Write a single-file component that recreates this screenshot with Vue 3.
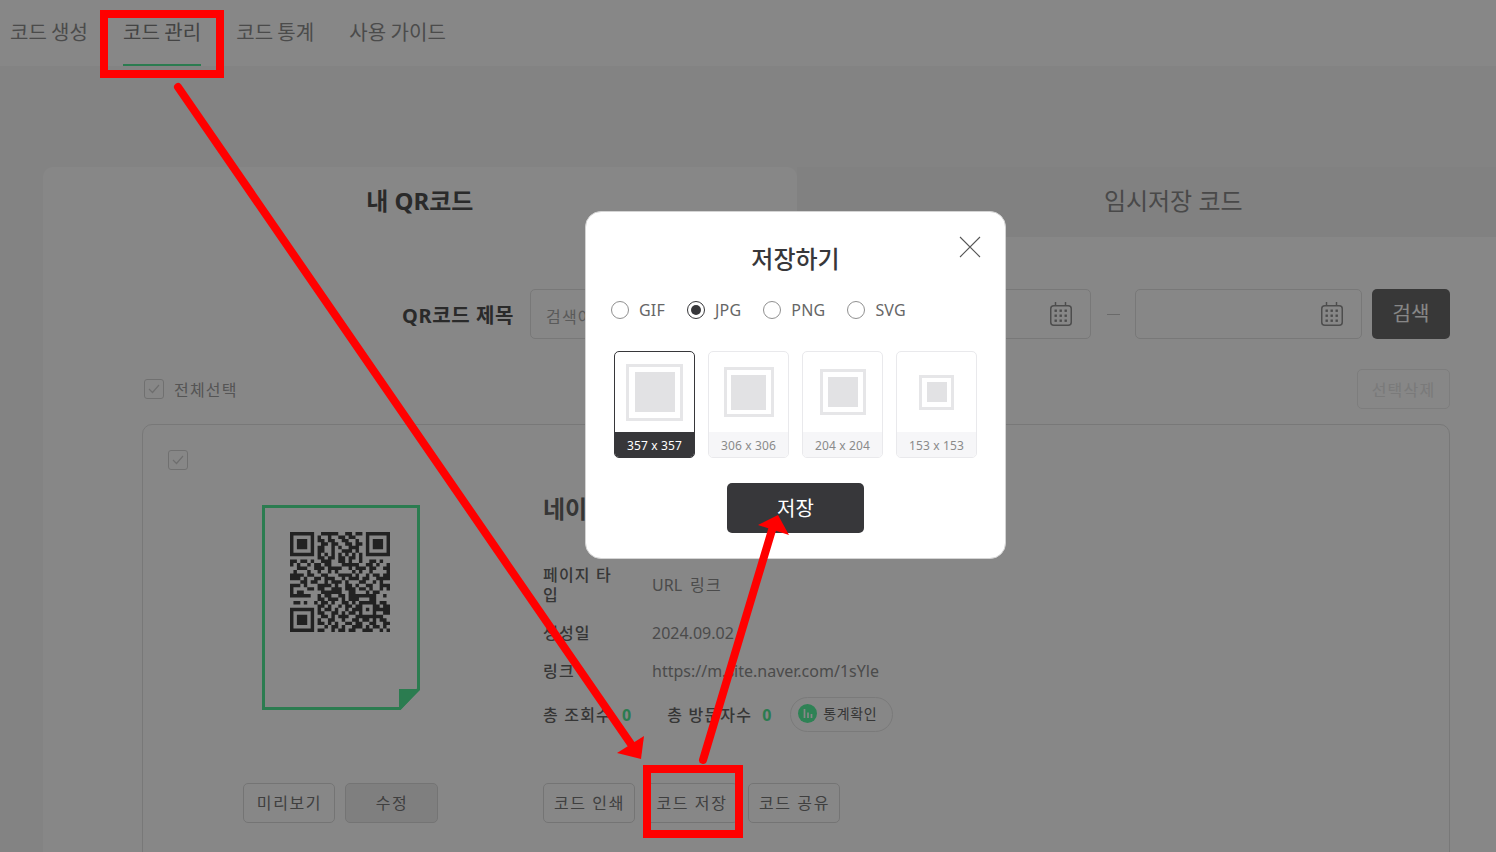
<script setup>
import { ref } from "vue";

const navItems = ["코드 생성", "코드 관리", "코드 통계", "사용 가이드"];
const activeNav = ref(1);

const formats = ["GIF", "JPG", "PNG", "SVG"];
const format = ref("JPG");

const sizes = [
  { label: "357 x 357", outer: 57, inner: 40 },
  { label: "306 x 306", outer: 50, inner: 35 },
  { label: "204 x 204", outer: 46, inner: 30 },
  { label: "153 x 153", outer: 35, inner: 20 },
];
const size = ref(0);

const qrRows = [
  "11111110011111001101101111111",
  "10000010100100110110001000001",
  "10111010110110011001001011101",
  "10111010011011001101101011101",
  "10111010110010100111001011101",
  "10000010110010011101001000001",
  "11111110101010101010101111111",
  "00000000110110110110100000000",
  "11011010011100110100100110100",
  "10100101101100011111001101001",
  "00111001110111100101110110011",
  "01000100100101000010100100001",
  "11110110011000111101001011011",
  "11101001101110010111011001111",
  "00011011001011101000110010100",
  "11101000111101001101001100111",
  "10000110110011101110110100101",
  "10110000011111100110001011000",
  "11111100101100110111111110010",
  "00000000110111010111000110000",
  "01101001011010011010111110110",
  "00000000110100101101100011011",
  "11111110101101001011101011111",
  "10000010110011010110100010011",
  "10111010011010111001111111100",
  "10111010100110010011011010110",
  "10111010110101001101100110011",
  "10000010001011010011101011010",
  "11111110110010110110011100101",
];

// one path for the whole code, 1 unit = 1 module
const qrPath = qrRows
  .map((row, y) =>
    row
      .split("")
      .map((cell, x) => (cell === "1" ? `M${x} ${y}h1v1h-1z` : ""))
      .join("")
  )
  .join("");

const calendarDots = [];
for (let r = 0; r < 3; r++) {
  for (let c = 0; c < 3; c++) calendarDots.push({ x: 4.5 + c * 5, y: 7.5 + r * 5 });
}
</script>

<template>
  <div class="page">
    <header class="top">
      <nav class="nav">
        <a
          v-for="(item, i) in navItems"
          :key="item"
          class="nav-item"
          :class="{ on: i === activeNav }"
        >{{ item }}</a>
      </nav>
    </header>

    <main class="panel-wrap">
      <div class="tabs">
        <div class="tab on">내 QR코드</div>
        <div class="tab">임시저장 코드</div>
      </div>

      <section class="panel">
        <div class="search">
          <label class="search-label">QR코드 제목</label>
          <div class="field title-field"><span class="placeholder">검색어</span></div>
          <div class="field date-field">
            <svg class="cal" width="22" height="24" viewBox="0 0 22 24">
              <rect x="0.75" y="3.75" width="20.5" height="19.5" rx="3" fill="none" stroke="#929292" stroke-width="1.5" />
              <path d="M5.5 0v4M15.5 0v4" stroke="#929292" stroke-width="1.5" />
              <rect v-for="(d, i) in calendarDots" :key="i" :x="d.x" :y="d.y" width="2.4" height="2.4" fill="#929292" />
            </svg>
          </div>
          <span class="dash"></span>
          <div class="field date-field">
            <svg class="cal" width="22" height="24" viewBox="0 0 22 24">
              <rect x="0.75" y="3.75" width="20.5" height="19.5" rx="3" fill="none" stroke="#929292" stroke-width="1.5" />
              <path d="M5.5 0v4M15.5 0v4" stroke="#929292" stroke-width="1.5" />
              <rect v-for="(d, i) in calendarDots" :key="i" :x="d.x" :y="d.y" width="2.4" height="2.4" fill="#929292" />
            </svg>
          </div>
          <button class="search-btn">검색</button>
        </div>

        <div class="list-bar">
          <label class="check-all">
            <span class="check">
              <svg width="12" height="10" viewBox="0 0 12 10"><path d="M1 5l3.5 3.5L11 1" fill="none" stroke="#d0d0d0" stroke-width="1.2" /></svg>
            </span>
            전체선택
          </label>
          <button class="del-btn">선택삭제</button>
        </div>

        <article class="item">
          <span class="check">
            <svg width="12" height="10" viewBox="0 0 12 10"><path d="M1 5l3.5 3.5L11 1" fill="none" stroke="#d0d0d0" stroke-width="1.2" /></svg>
          </span>

          <div class="item-body">
            <div class="item-left">
              <div class="doc">
                <svg width="158" height="205" viewBox="0 0 158 205">
                  <path d="M1.5 1.5H156.5V184L138 203.5H1.5Z" fill="#fff" stroke="#52ea98" stroke-width="3" />
                  <path d="M138 203.5V185H156.5Z" fill="#52ea98" stroke="#52ea98" stroke-width="2" />
                  <g class="qr" transform="translate(28 27) scale(3.448)">
                    <path :d="qrPath" fill="#404040" />
                  </g>
                </svg>
              </div>
              <div class="btn-row">
                <button class="btn">미리보기</button>
                <button class="btn grey">수정</button>
              </div>
            </div>

            <div class="item-right">
              <h3 class="item-title">네이버 링크</h3>
              <div class="rows">
                <div class="info-row">
                  <span class="info-label">페이지 타입</span>
                  <span class="info-value">URL<span class="ko">링크</span></span>
                </div>
                <div class="info-row">
                  <span class="info-label">생성일</span>
                  <span class="info-value">2024.09.02</span>
                </div>
                <div class="info-row">
                  <span class="info-label">링크</span>
                  <span class="info-value">https://m.site.naver.com/1sYle</span>
                </div>
              </div>
              <div class="stats">
                <span class="info-label stat-name">총 조회수</span>
                <b class="num first">0</b>
                <span class="info-label stat-name">총 방문자수</span>
                <b class="num">0</b>
                <span class="pill">
                  <span class="pill-ico">
                    <svg width="10" height="9" viewBox="0 0 10 9"><path d="M1.5 0v9M5 3.5V9M8.5 5v4" stroke="#fff" stroke-width="1.7" /></svg>
                  </span>
                  통계확인
                </span>
              </div>
              <div class="btn-row wide">
                <button class="btn">코드 인쇄</button>
                <button class="btn">코드 저장</button>
                <button class="btn">코드 공유</button>
              </div>
            </div>
          </div>
        </article>
      </section>
    </main>

    <div class="dim"></div>

    <div class="modal">
      <button class="close">
        <svg width="22" height="22" viewBox="0 0 22 22"><path d="M1 1l20 20M21 1L1 21" stroke="#555" stroke-width="1.1" /></svg>
      </button>
      <h2 class="modal-title">저장하기</h2>

      <div class="formats">
        <label v-for="f in formats" :key="f" class="radio" @click="format = f">
          <span class="dot" :class="{ on: format === f }"></span>
          {{ f }}
        </label>
      </div>

      <div class="sizes">
        <div
          v-for="(s, i) in sizes"
          :key="s.label"
          class="size"
          :class="{ on: size === i }"
          @click="size = i"
        >
          <div class="size-pic">
            <div class="frame" :style="{ width: s.outer + 'px', height: s.outer + 'px' }">
              <div class="fill" :style="{ width: s.inner + 'px', height: s.inner + 'px' }"></div>
            </div>
          </div>
          <div class="size-label">{{ s.label }}</div>
        </div>
      </div>

      <button class="save">저장</button>
    </div>

    <!-- red marks drawn on top of the capture -->
    <svg class="marks" width="1496" height="852" viewBox="0 0 1496 852">
      <rect x="104" y="14" width="116" height="60" fill="none" stroke="#ff0000" stroke-width="8" />
      <rect x="647" y="769" width="92" height="65" fill="none" stroke="#ff0000" stroke-width="8" />
      <path d="M178 87L633 747" stroke="#ff0000" stroke-width="8" stroke-linecap="round" />
      <path d="M644 736L617 753L641 759Z" fill="#ff0000" />
      <path d="M703 760L772 530" stroke="#ff0000" stroke-width="8" stroke-linecap="round" />
      <path d="M778 515L758 525L789 535Z" fill="#ff0000" />
    </svg>
  </div>
</template>

<style>
html,
body {
  margin: 0;
  overflow: hidden;
}
</style>

<style scoped>
.page {
  position: relative;
  width: 1496px;
  height: 852px;
  overflow: hidden;
  background: #f8f8f8;
  font-family: "Noto Sans", "Noto Sans CJK KR", sans-serif;
  color: #37373a;
}

.top {
  height: 66px;
  background: #fff;
  padding-left: 10px;
  box-sizing: border-box;
}
.nav {
  display: flex;
  gap: 35px;
}
.nav-item {
  display: block;
  height: 66px;
  box-sizing: border-box;
  padding-top: 18px;
  font-size: 20px;
  line-height: 30px;
  letter-spacing: 0.1px;
  word-spacing: -1.2px;
  color: #8e8e8e;
}
.nav-item.on {
  color: #808080;
  border-bottom: 2px solid #52ea98;
}

.panel-wrap {
  width: 1507px;
  margin: 101px 0 0 43px;
}
.tabs {
  display: flex;
}
.tab {
  flex: 1;
  height: 70px;
  line-height: 68px;
  text-align: center;
  font-size: 24px;
  color: #8a8a8a;
  background: #f3f3f3;
}
.tab.on {
  background: #fff;
  color: #505050;
  font-weight: 700;
  border-radius: 10px 10px 0 0;
}

.panel {
  background: #fff;
  padding: 52px 100px 0;
}
.search {
  display: flex;
  align-items: center;
  justify-content: flex-end;
  height: 50px;
}
.search-label {
  font-size: 20px;
  font-weight: 700;
  letter-spacing: 0.6px;
  color: #505050;
  margin-right: 16px;
  white-space: nowrap;
}
.field {
  height: 50px;
  box-sizing: border-box;
  border: 1px solid #e2e2e2;
  border-radius: 5px;
  display: flex;
  align-items: center;
}
.title-field {
  width: 320px;
  padding-left: 15px;
  margin-right: 14px;
}
.placeholder {
  padding-top: 3px;
  font-size: 16px;
  letter-spacing: 1.2px;
  color: #aaa;
}
.date-field {
  width: 227px;
  justify-content: flex-end;
  padding-right: 18px;
}
.dash {
  width: 13px;
  height: 1px;
  background: #c8c8c8;
  margin: 0 15px 0 16px;
}
.search-btn {
  width: 78px;
  height: 50px;
  padding: 0 0 3px;
  margin-left: 10px;
  border: 0;
  border-radius: 5px;
  background: #6b6b6b;
  color: #fff;
  font: inherit;
  font-size: 20px;
}

.list-bar {
  display: flex;
  align-items: center;
  justify-content: space-between;
  margin-top: 30px;
  height: 40px;
}
.check-all {
  display: flex;
  align-items: center;
  gap: 10px;
  margin-left: 1px;
  font-size: 16px;
  letter-spacing: 1.2px;
  color: #a0a0a0;
}
.check {
  width: 20px;
  height: 20px;
  box-sizing: border-box;
  border: 1px solid #d4d4d4;
  border-radius: 3px;
  display: flex;
  align-items: center;
  justify-content: center;
}
.del-btn {
  width: 93px;
  height: 40px;
  padding: 0;
  border: 1px solid #ececec;
  border-radius: 5px;
  background: #fff;
  color: #e6e6e6;
  font: inherit;
  font-size: 16px;
  letter-spacing: 1.2px;
}

.item {
  margin: 15px 0 0 -1px;
  height: 500px;
  box-sizing: border-box;
  border: 1px solid #e2e2e2;
  border-radius: 10px;
  padding: 25px 24px 0 25px;
}
.item-body {
  display: flex;
  margin-top: 20px;
}
.item-left {
  width: 195px;
  margin-left: 75px;
  padding-top: 15px;
  display: flex;
  flex-direction: column;
}
.doc {
  height: 205px;
  margin-left: 19px;
}
.doc svg {
  display: block;
}
.qr {
  filter: blur(0.1px);
}
.btn-row {
  display: flex;
  gap: 10px;
  margin-top: 73px;
}
.btn {
  width: 92px;
  height: 40px;
  padding: 0 0 2px 1px;
  box-sizing: border-box;
  border: 1px solid #dcdcdc;
  border-radius: 5px;
  background: #fff;
  color: #777;
  font: inherit;
  font-size: 16px;
  letter-spacing: 1.6px;
}
.btn.grey {
  width: 93px;
  background: #f0f0f0;
}

.item-right {
  margin-left: 105px;
  width: 600px;
}
.item-title {
  margin: 0;
  font-size: 24px;
  line-height: 38px;
  font-weight: 700;
  color: #666;
}
.rows {
  margin-top: 37px;
  display: flex;
  flex-direction: column;
  gap: 18px;
}
.info-row {
  display: flex;
  align-items: center;
}
.info-label {
  width: 75px;
  margin-right: 34px;
  font-size: 16px;
  line-height: 20px;
  letter-spacing: 1.2px;
  color: #666;
  font-weight: 500;
}
.info-value {
  font-size: 16px;
  line-height: 20px;
  color: #8e8e8e;
}
.ko {
  margin-left: 8px;
  letter-spacing: 1.2px;
}
.stats {
  display: flex;
  align-items: center;
  height: 35px;
  margin-top: 16px;
}
.stat-name {
  width: auto;
  margin-right: 0;
}
.num {
  margin-left: 10px;
  margin-right: 19px;
  font-size: 16px;
  color: #52ea98;
}
.num.first {
  margin-right: 36px;
}
.pill {
  display: flex;
  align-items: center;
  gap: 6px;
  height: 35px;
  box-sizing: border-box;
  padding: 0 15px 3px 7px;
  border: 1px solid #e6e6e6;
  border-radius: 18px;
  font-size: 14px;
  letter-spacing: 0.6px;
  color: #666;
}
.pill-ico {
  width: 19px;
  height: 19px;
  border-radius: 50%;
  background: #57f5a0;
  display: flex;
  align-items: center;
  justify-content: center;
}
.pill-ico svg {
  display: block;
}
.btn-row.wide {
  gap: 10.5px;
  margin-top: 51px;
}

.dim {
  position: absolute;
  inset: 0;
  background: rgba(0, 0, 0, 0.47);
  z-index: 10;
}

.modal {
  position: absolute;
  left: 585px;
  top: 211px;
  width: 421px;
  height: 348px;
  box-sizing: border-box;
  padding-top: 30px;
  background: #fff;
  border: 1px solid #d4d4d4;
  border-radius: 16px;
  z-index: 20;
  display: flex;
  flex-direction: column;
  align-items: center;
}
.close {
  position: absolute;
  right: 24px;
  top: 24px;
  padding: 0;
  border: 0;
  background: none;
  line-height: 0;
}
.modal-title {
  margin: 0;
  font-size: 24px;
  line-height: 34px;
  font-weight: 500;
  color: #37373a;
}
.formats {
  display: flex;
  gap: 22px;
  align-self: flex-start;
  margin: 23px 0 0 25px;
}
.radio {
  display: flex;
  align-items: center;
  gap: 10px;
  font-size: 16px;
  line-height: 22px;
  letter-spacing: 0.2px;
  color: #666;
}
.dot {
  position: relative;
  width: 18px;
  height: 18px;
  box-sizing: border-box;
  border: 1px solid #909090;
  border-radius: 50%;
}
.dot.on {
  border-color: #37373a;
}
.dot.on::after {
  content: "";
  position: absolute;
  inset: 3px;
  border-radius: 50%;
  background: #37373a;
}
.sizes {
  display: flex;
  gap: 13px;
  margin-top: 30px;
}
.size {
  width: 81px;
  height: 107px;
  box-sizing: border-box;
  border: 1px solid #e9e9ec;
  border-radius: 5px;
  overflow: hidden;
  display: flex;
  flex-direction: column;
}
.size.on {
  border-color: #37373a;
}
.size-pic {
  flex: 1;
  display: flex;
  align-items: center;
  justify-content: center;
}
.frame {
  box-sizing: border-box;
  border: 3px solid #e6e6e8;
  display: flex;
  align-items: center;
  justify-content: center;
}
.fill {
  background: #e2e2e4;
  flex: none;
}
.size-label {
  height: 25px;
  line-height: 27px;
  text-align: center;
  font-size: 12px;
  letter-spacing: 0.15px;
  color: #8a8a8a;
  background: #f6f6f8;
}
.size.on .size-label {
  background: #37373a;
  color: #fff;
}
.save {
  width: 137px;
  height: 50px;
  padding: 0 0 2px;
  margin-top: 25px;
  border: 0;
  border-radius: 5px;
  background: #37373a;
  color: #fff;
  font: inherit;
  font-size: 20px;
}

.marks {
  position: absolute;
  left: 0;
  top: 0;
  z-index: 30;
}
</style>
